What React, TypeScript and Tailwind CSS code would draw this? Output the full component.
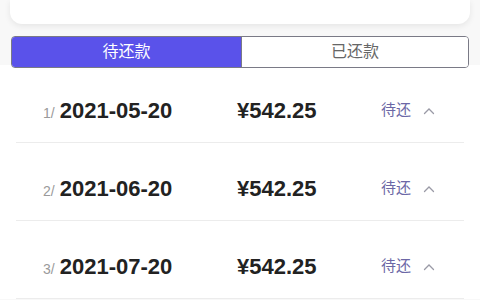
import React from 'react';

const rows = [
  { idx: '1/', date: '2021-05-20', amount: '¥542.25' },
  { idx: '2/', date: '2021-06-20', amount: '¥542.25' },
  { idx: '3/', date: '2021-07-20', amount: '¥542.25' },
];

const font = { fontFamily: '"Liberation Sans", "Noto Sans CJK SC", sans-serif' };

const App: React.FC = () => {
  return (
    <div className="w-[480px] h-[300px] overflow-hidden bg-[#f8f8f8]" style={font}>
      <div className="px-[10px]">
        <div className="h-[24px] bg-white rounded-b-[12px] shadow-[0_2px_6px_rgba(0,0,0,0.08)]" />
      </div>

      <div className="relative z-10 mx-[11px] mt-[12px] h-[32px] flex rounded-[4px] border border-[#7a7a86] overflow-hidden">
        <div className="w-[229px] bg-[#5a52ea] text-white text-[16px] flex items-center justify-center">
          待还款
        </div>
        <div className="flex-1 bg-white text-[#666] text-[16px] flex items-center justify-center border-l border-[#7a7a86]">
          已还款
        </div>
      </div>

      <div className="bg-white mt-[-3px]">
        {rows.map((r) => (
          <div key={r.idx} className="mx-[16px] h-[78px] pt-[14px] flex items-center border-b border-[#ececec]">
            <div className="w-[221px] pl-[27px] flex items-baseline">
              <span className="text-[14px] text-[#9a9a9a] mr-[5px]">{r.idx}</span>
              <span className="text-[22px] font-bold text-[#222]">{r.date}</span>
            </div>
            <div className="w-[144px] text-[22px] font-bold text-[#222]">{r.amount}</div>
            <div className="flex items-center text-[15px] text-[#6c67a6]">
              <span>待还</span>
              <svg width="12" height="8" viewBox="0 0 12 8" className="ml-[12px]" fill="none">
                <path d="M1.5 6.5 L6 2 L10.5 6.5" stroke="#9a9aa6" strokeWidth="1.3" strokeLinecap="round" />
              </svg>
            </div>
          </div>
        ))}
      </div>
    </div>
  );
};

export default App;
